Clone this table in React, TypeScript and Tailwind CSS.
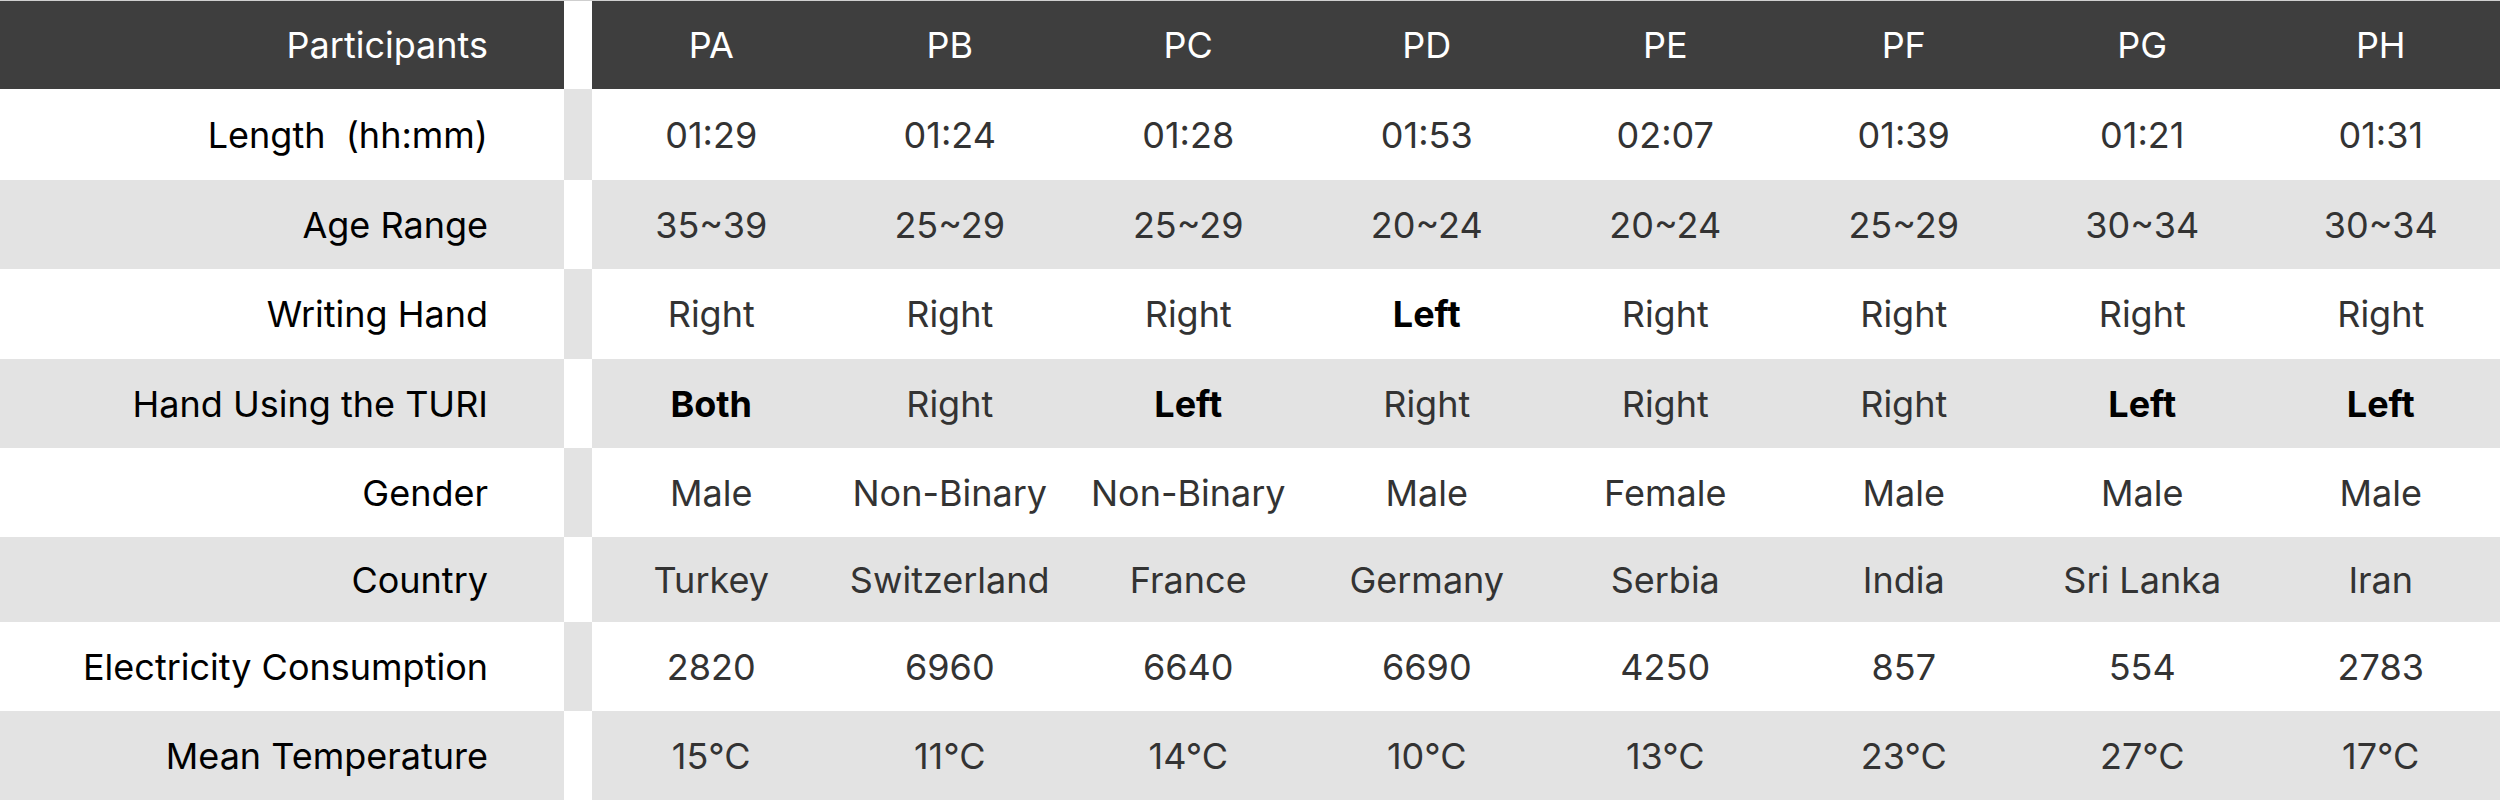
const columns = ["PA", "PB", "PC", "PD", "PE", "PF", "PG", "PH"];

type Cell = string | { v: string; bold: true };

const b = (v: string): Cell => ({ v, bold: true });

const rows: { label: string; h: string; cells: Cell[] }[] = [
  { label: "Length  (hh:mm)", h: "h-[91px]", cells: ["01:29", "01:24", "01:28", "01:53", "02:07", "01:39", "01:21", "01:31"] },
  { label: "Age Range", h: "h-[89px]", cells: ["35~39", "25~29", "25~29", "20~24", "20~24", "25~29", "30~34", "30~34"] },
  { label: "Writing Hand", h: "h-[90px]", cells: ["Right", "Right", "Right", b("Left"), "Right", "Right", "Right", "Right"] },
  { label: "Hand Using the TURI", h: "h-[89px]", cells: [b("Both"), "Right", b("Left"), "Right", "Right", "Right", b("Left"), b("Left")] },
  { label: "Gender", h: "h-[89px]", cells: ["Male", "Non-Binary", "Non-Binary", "Male", "Female", "Male", "Male", "Male"] },
  { label: "Country", h: "h-[85px]", cells: ["Turkey", "Switzerland", "France", "Germany", "Serbia", "India", "Sri Lanka", "Iran"] },
  { label: "Electricity Consumption", h: "h-[89px]", cells: ["2820", "6960", "6640", "6690", "4250", "857", "554", "2783"] },
  { label: "Mean Temperature", h: "h-[89px]", cells: ["15°C", "11°C", "14°C", "10°C", "13°C", "23°C", "27°C", "17°C"] },
];

export default function App() {
  return (
    <div className="w-[2500px] h-[800px] overflow-hidden bg-white border-t border-[#cfcfcf] font-['Inter',sans-serif] text-[36px]">
      {/* header */}
      <div className="grid grid-cols-[564px_28px_repeat(8,1fr)] h-[88px] text-white">
        <div className="bg-[#3e3e3e] flex items-center justify-end pr-[76px]">Participants</div>
        <div className="bg-white" />
        {columns.map((c) => (
          <div key={c} className="bg-[#3e3e3e] flex items-center justify-center">
            {c}
          </div>
        ))}
      </div>

      {rows.map((row, i) => {
        const shaded = i % 2 === 1;
        return (
          <div
            key={row.label}
            className={`grid grid-cols-[564px_28px_repeat(8,1fr)] ${row.h} ${shaded ? "bg-[#e3e3e3]" : "bg-white"}`}
          >
            <div className="flex items-center justify-end pr-[76px] text-black whitespace-pre">{row.label}</div>
            <div className={shaded ? "bg-white" : "bg-[#e3e3e3]"} />
            {row.cells.map((cell, j) => {
              const bold = typeof cell !== "string";
              return (
                <div
                  key={j}
                  className={`flex items-center justify-center ${bold ? "font-bold text-black" : "text-[#333333]"}`}
                >
                  {bold ? cell.v : cell}
                </div>
              );
            })}
          </div>
        );
      })}
    </div>
  );
}
